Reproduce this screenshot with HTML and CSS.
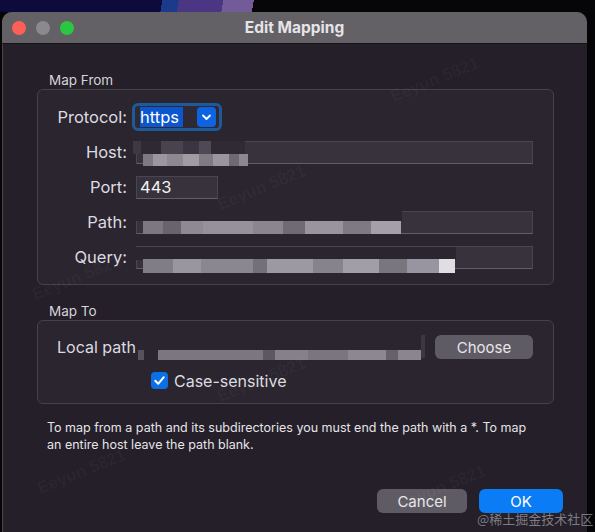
FILE: index.html
```html
<!DOCTYPE html>
<html lang="en">
<head>
    <meta charset="UTF-8">
    <meta name="viewport" content="width=device-width, initial-scale=1.0">
    <title>Edit Mapping</title>
    <link rel="stylesheet" href="styles.css">
</head>
<body>
    <div class="desktop"></div>

    <div class="window">
        <!-- Barre de titre -->
        <div class="titlebar">
            <div class="lights">
                <span class="light red"></span>
                <span class="light gray"></span>
                <span class="light green"></span>
            </div>
            <div class="title">Edit Mapping</div>
            <div></div>
        </div>

        <div class="content">
            <!-- Map From -->
            <div class="group-label">Map From</div>
            <div class="group-box from-grid">
                <span class="field-label">Protocol:</span>
                <div class="popup">
                    <span class="popup-value">https</span>
                    <span class="chevron">
                        <svg width="19" height="20" viewBox="0 0 19 20"><path d="M6 8.5 L9.5 12 L13 8.5" fill="none" stroke="#fff" stroke-width="1.8" stroke-linecap="round" stroke-linejoin="round"/></svg>
                    </span>
                </div>

                <span class="field-label">Host:</span>
                <div class="field">
                    <span class="redact redact-host-top"></span>
                    <span class="redact redact-host"></span>
                </div>

                <span class="field-label">Port:</span>
                <div class="field port">443</div>

                <span class="field-label">Path:</span>
                <div class="field">
                    <span class="redact redact-path-top"></span>
                    <span class="redact redact-path"></span>
                </div>

                <span class="field-label">Query:</span>
                <div class="field">
                    <span class="redact redact-query-top"></span>
                    <span class="redact redact-query"></span>
                </div>
            </div>

            <!-- Map To -->
            <div class="group-label second">Map To</div>
            <div class="group-box to-box">
                <div class="local-row">
                    <span class="local-label">Local path</span>
                    <div class="local-field">
                        <span class="redact redact-local-dot"></span>
                        <span class="redact redact-local"></span>
                        <span class="redact redact-local-end"></span>
                    </div>
                    <button class="button choose">Choose</button>
                </div>
                <div class="check-row">
                    <span class="checkbox">
                        <svg width="17" height="17" viewBox="0 0 17 17"><path d="M4.3 8.8 L7.2 11.8 L12.8 5.2" fill="none" stroke="#fff" stroke-width="2" stroke-linecap="round" stroke-linejoin="round"/></svg>
                    </span>
                    <span class="check-text">Case-sensitive</span>
                </div>
            </div>

            <p class="help">To map from a path and its subdirectories you must end the path with a *. To map<br>an entire host leave the path blank.</p>

            <div class="actions">
                <button class="button cancel">Cancel</button>
                <button class="button ok">OK</button>
            </div>
        </div>
    </div>

    <!-- Filigranes -->
    <span class="mark mark-1">Eeyun 5821</span>
    <span class="mark mark-2">Eeyun 5821</span>
    <span class="mark mark-3">Eeyun 5821</span>
    <span class="mark mark-4">Eeyun 5821</span>
    <span class="mark mark-5">Eeyun 5821</span>
    <span class="mark mark-6">Eeyun 5821</span>

    <div class="credit">@稀土掘金技术社区</div>
</body>
</html>
```

FILE: styles.css
```css
/* Base */
body {
    margin: 0;
    width: 595px;
    height: 532px;
    overflow: hidden;
    position: relative;
    background-color: #050406;
    font-family: 'Inter', 'Liberation Sans', sans-serif;
    color: #dddbe0;
}

.desktop {
    height: 12px;
    background: linear-gradient(100deg, #0d0b3b 0 160px, #1b3a8a 160px 176px, #4a3683 176px 220px, #735a98 220px 250px, #060508 250px);
}

/* Fenêtre */
.window {
    margin-left: 2px;
    width: 585px;
    height: 520px;
    background-color: #241f28;
    border-radius: 10px 10px 0 0;
    overflow: hidden;
    box-shadow: inset 1px 0 0 #4a4650;
}

.titlebar {
    height: 31px;
    border-bottom: 1px solid #151317;
    background-color: #636166;
    display: grid;
    grid-template-columns: 1fr auto 1fr;
    align-items: center;
}

.lights {
    display: flex;
    gap: 10px;
    padding-left: 10px;
}

.light {
    width: 14px;
    height: 14px;
    border-radius: 50%;
}

.red { background-color: #fe5f57; }
.gray { background-color: #8b898d; }
.green { background-color: #2ac840; }

.title {
    font-weight: 700;
    font-size: 15.5px;
    color: #e6e4e8;
}

.content {
    padding: 28px 33px 0 35px;
}

/* Groupes */
.group-label {
    font-size: 13.5px;
    line-height: 16px;
    margin: 0 0 1px 12px;
    color: #d6d4d9;
}

.group-label.second {
    margin-top: 18px;
}

.group-box {
    background-color: #2a252e;
    border: 1px solid #46414b;
    border-radius: 6px;
}

.from-grid {
    display: grid;
    grid-template-columns: 70px 1fr;
    grid-auto-rows: 28px;
    column-gap: 5px;
    row-gap: 7px;
    align-items: center;
    padding: 13px 20px 13px 19px;
}

.field-label {
    text-align: right;
    font-size: 16.5px;
}

.field {
    position: relative;
    height: 23px;
    box-sizing: border-box;
    margin-left: 4px;
    background-color: #37323c;
    border: 1px solid #4a4550;
    border-bottom-color: #625d68;
}

.field.port {
    width: 82px;
    font-size: 16.5px;
    line-height: 21px;
    padding-left: 3px;
    color: #f2f2f2;
}

/* Menu déroulant */
.popup {
    width: 90px;
    height: 28px;
    box-sizing: border-box;
    border: 3px solid #1d5a97;
    border-radius: 6px;
    background-color: #2e2934;
    display: flex;
    align-items: center;
    justify-content: space-between;
    padding: 0 3px 0 5px;
}

.popup-value {
    background-color: #0b57d0;
    color: #fff;
    font-size: 16.5px;
    line-height: 20px;
    padding-right: 4px;
}

.chevron {
    display: flex;
    width: 19px;
    height: 20px;
    border-radius: 4px;
    background-color: #0d64e3;
}

/* Zones masquées */
.redact {
    position: absolute;
}

.redact-host-top {
    left: -6px;
    top: -1px;
    width: 114px;
    height: 13px;
    background: linear-gradient(90deg, #2a252e 0 2px, #3d3842 2px 10px, #2e2933 10px 30px, #48434d 30px 52px, #3a3540 52px 68px, #4e4953 68px 80px, #2f2a34 80px 114px);
}

.redact-host {
    left: 6px;
    top: 12px;
    width: 105px;
    height: 12px;
    background: linear-gradient(90deg, #7d7981 0 10px, #9b979f 10px 24px, #8d8991 24px 40px, #a09ca4 40px 56px, #7f7b83 56px 70px, #9a969e 70px 86px, #6e6a72 86px 96px, #8c8890 96px 105px);
}

.redact-path-top {
    left: -1px;
    top: -1px;
    width: 266px;
    height: 10px;
    background-color: #2a252e;
}

.redact-path {
    left: 6px;
    top: 9px;
    width: 258px;
    height: 13px;
    background: linear-gradient(90deg, #7c7880 0 20px, #68646c 20px 38px, #8e8a92 38px 60px, #96929a 60px 110px, #8a868e 110px 140px, #6f6b73 140px 162px, #99959d 162px 200px, #7e7a82 200px 228px, #a3a0a7 228px 258px);
}

.redact-query-top {
    left: -1px;
    top: -1px;
    width: 320px;
    height: 13px;
    background-color: #2a252e;
    border-top: 1px solid #4a4550;
}

.redact-query {
    left: 6px;
    top: 12px;
    width: 312px;
    height: 14px;
    background: linear-gradient(90deg, #817d85 0 30px, #9a969e 30px 58px, #8b8790 58px 110px, #74707a 110px 124px, #9d99a1 124px 170px, #87838b 170px 200px, #a29ea6 200px 236px, #7a767e 236px 264px, #9995a0 264px 296px, #e0dde3 296px 312px);
}

/* Map To */
.to-box {
    padding: 14px 20px 13px 19px;
}

.local-row {
    display: flex;
    align-items: center;
    height: 24px;
}

.local-label {
    font-size: 16px;
}

.local-field {
    position: relative;
    flex: 1;
    height: 24px;
    margin: 0 10px 0 2px;
}

.redact-local-dot {
    left: 0;
    top: 15px;
    width: 6px;
    height: 10px;
    background-color: #57525c;
}

.redact-local {
    left: 20px;
    top: 15px;
    width: 263px;
    height: 10px;
    background: linear-gradient(90deg, #7b7780 0 105px, #5c5861 105px 117px, #85818a 117px 150px, #7a767f 150px 190px, #8c8890 190px 228px, #66626b 228px 240px, #8a868f 240px 263px);
}

.redact-local-end {
    right: 0;
    top: 0;
    width: 4px;
    height: 23px;
    background-color: #3c3742;
}

.check-row {
    display: flex;
    align-items: center;
    gap: 6px;
    height: 19px;
    margin-top: 12px;
    padding-left: 94px;
}

.checkbox {
    display: flex;
    width: 17px;
    height: 17px;
    border-radius: 4px;
    background-color: #0b6fe6;
}

.check-text {
    font-size: 16px;
}

/* Texte d'aide */
.help {
    margin: 15px 0 0 10px;
    font-size: 12.5px;
    line-height: 17px;
    color: #e6e4e8;
    white-space: nowrap;
}

/* Boutons */
.actions {
    display: flex;
    justify-content: flex-end;
    gap: 12px;
    margin: 36px -9px 0 0;
}

.button {
    height: 24px;
    border: none;
    border-radius: 6px;
    padding: 0;
    font-family: 'Inter', 'Liberation Sans', sans-serif;
    font-size: 15px;
    color: #e8e6ea;
    background-color: #5f5b64;
}

.choose { width: 98px; }
.cancel { width: 90px; }

.ok {
    width: 84px;
    color: #fff;
    background-color: #0a7cf5;
}

/* Filigranes */
.mark {
    position: absolute;
    font-family: 'Liberation Sans', sans-serif;
    font-weight: 700;
    font-size: 17px;
    color: rgba(255, 255, 255, 0.04);
    transform: rotate(-22deg);
    white-space: nowrap;
}

.mark-1 { left: 388px; top: 70px; }
.mark-2 { left: 215px; top: 178px; }
.mark-3 { left: 30px; top: 268px; }
.mark-4 { left: 215px; top: 370px; }
.mark-5 { left: 35px; top: 462px; }
.mark-6 { left: 395px; top: 478px; }

.credit {
    position: absolute;
    left: 477px;
    top: 509px;
    font-family: 'Noto Sans CJK SC', sans-serif;
    font-size: 13px;
    color: rgba(190, 190, 196, 0.6);
}
```
